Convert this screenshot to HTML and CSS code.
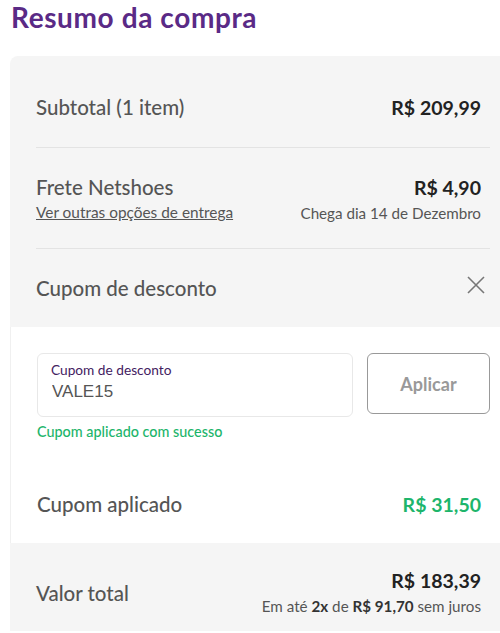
FILE: index.html
```html
<!DOCTYPE html>
<html lang="pt-BR">
<head>
    <meta charset="UTF-8">
    <meta name="viewport" content="width=device-width, initial-scale=1.0">
    <title>Resumo da compra</title>
    <link rel="stylesheet" href="styles.css">
</head>
<body>
    <h1 class="title">Resumo da compra</h1>

    <div class="summary">
        <div class="summary-top">
            <div class="row row-subtotal">
                <span class="label">Subtotal (1 item)</span>
                <span class="value">R$ 209,99</span>
            </div>
            <div class="row row-shipping">
                <div class="col">
                    <span class="label">Frete Netshoes</span>
                    <a href="#" class="link">Ver outras opções de entrega</a>
                </div>
                <div class="col col-right">
                    <span class="value">R$ 4,90</span>
                    <span class="note">Chega dia 14 de Dezembro</span>
                </div>
            </div>
            <div class="row row-coupon">
                <span class="label">Cupom de desconto</span>
                <button class="close-btn" aria-label="Fechar">
                    <svg width="20" height="20" viewBox="0 0 20 20">
                        <path d="M2 2 L18 18 M18 2 L2 18" stroke="#777" stroke-width="1.6" fill="none"/>
                    </svg>
                </button>
            </div>
        </div>

        <div class="coupon-box">
            <div class="coupon-form">
                <div class="field">
                    <label for="coupon">Cupom de desconto</label>
                    <input type="text" id="coupon" value="VALE15">
                </div>
                <button class="apply-btn">Aplicar</button>
            </div>
            <p class="success">Cupom aplicado com sucesso</p>

            <div class="row row-applied">
                <span class="label">Cupom aplicado</span>
                <span class="value discount">R$ 31,50</span>
            </div>
        </div>

        <div class="total">
            <span class="label">Valor total</span>
            <div class="col col-right">
                <span class="value">R$ 183,39</span>
                <span class="note">Em até <strong>2x</strong> de <strong>R$ 91,70</strong> sem juros</span>
            </div>
        </div>
    </div>
</body>
</html>
```

FILE: styles.css
```css
* {
    margin: 0;
    padding: 0;
    box-sizing: border-box;
}

body {
    font-family: 'Lato', 'Open Sans', sans-serif;
    background: #fff;
    padding-left: 10px;
    overflow: hidden;
}

.title {
    color: #5a2a86;
    font-size: 28px;
    font-weight: 700;
    letter-spacing: 0.6px;
    line-height: 34px;
    margin-left: 1px;
    margin-bottom: 22px;
}

.summary {
    background: #f5f5f5;
    border-radius: 8px 0 0 0;
}

.summary-top {
    padding: 0 10px 0 26px;
}

.row {
    display: flex;
    justify-content: space-between;
    align-items: center;
    padding-right: 9px;
}

.row-subtotal,
.row-shipping {
    border-bottom: 1px solid #e3e3e3;
}

.row-subtotal {
    height: 92px;
    padding-top: 12px;
}

.row-shipping {
    height: 101px;
    align-items: flex-start;
    padding-top: 27px;
}

.row-coupon {
    height: 78px;
    padding-right: 4px;
}

.col {
    display: flex;
    flex-direction: column;
}

.col-right {
    align-items: flex-end;
}

.label {
    color: #555;
    font-size: 20.5px;
    font-weight: 500;
    line-height: 25px;
}

.value {
    color: #222;
    font-size: 19.5px;
    font-weight: 700;
    line-height: 25px;
}

.link {
    color: #555;
    font-size: 15.4px;
    line-height: 25px;
    text-decoration: underline;
}

.note {
    color: #555;
    font-size: 15.2px;
    line-height: 26px;
}

.note strong {
    color: #333;
}

.close-btn {
    background: none;
    border: none;
    display: flex;
    margin-bottom: 6px;
    cursor: pointer;
}

.coupon-box {
    background: #fff;
    border-left: 1px solid #f0f0f0;
    padding: 26px 10px 0 26px;
    height: 216px;
}

.coupon-form {
    display: flex;
    gap: 14px;
}

.field {
    flex: 1;
    height: 64px;
    border: 1px solid #e8e8e8;
    border-radius: 6px;
    padding: 7px 14px 0 13px;
    display: flex;
    flex-direction: column;
}

.field label {
    color: #43215f;
    font-size: 13.7px;
    line-height: 17px;
}

.field input {
    border: none;
    outline: none;
    background: none;
    font-family: 'Liberation Sans', Arial, sans-serif;
    font-size: 17px;
    color: #555;
    line-height: 28px;
    padding-left: 1px;
}

.apply-btn {
    width: 123px;
    height: 61px;
    border: 1.5px solid #999;
    border-radius: 6px;
    background: #fff;
    color: #999;
    font-family: 'Lato', sans-serif;
    font-size: 18px;
    font-weight: 700;
    cursor: pointer;
}

.success {
    color: #1db56b;
    font-size: 14.4px;
    font-weight: 500;
    line-height: 26px;
    margin-top: 2px;
}

.row-applied {
    height: 94px;
    padding-top: 24px;
}

.discount {
    color: #1db56b;
}

.total {
    display: flex;
    justify-content: space-between;
    align-items: center;
    padding: 25px 19px 12px 26px;
}
```
